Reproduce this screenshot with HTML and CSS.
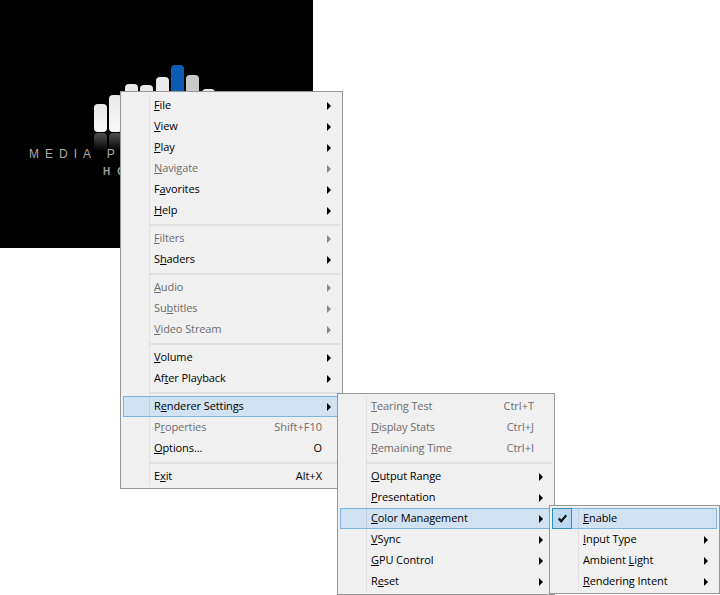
FILE: index.html
```html
<!DOCTYPE html>
<html lang="en">
<head>
<meta charset="utf-8">
<title>Media Player Classic menu</title>
<link rel="stylesheet" href="styles.css">
</head>
<body>
<div class="stage">
  <div class="video">
    <div class="bars">
      <i class="bar b1"></i><i class="bar b2"></i><i class="bar b3"></i><i class="bar b4"></i><i class="bar b5"></i><i class="bar blue"></i><i class="bar gray"></i><i class="bar b8"></i><i class="bar b9"></i>
    </div>
    <div class="reflections">
      <i class="ref"></i><i class="ref"></i><i class="ref"></i><i class="ref"></i><i class="ref"></i>
    </div>
    <div class="title">MEDIA P</div>
    <div class="subtitle">HO</div>
  </div>

  <div class="menu menu-main">
    <div class="item sub"><span class="label"><u>F</u>ile</span></div>
    <div class="item sub"><span class="label"><u>V</u>iew</span></div>
    <div class="item sub"><span class="label"><u>P</u>lay</span></div>
    <div class="item sub off"><span class="label"><u>N</u>avigate</span></div>
    <div class="item sub"><span class="label">F<u>a</u>vorites</span></div>
    <div class="item sub"><span class="label"><u>H</u>elp</span></div>
    <div class="sep"></div>
    <div class="item sub off"><span class="label"><u>F</u>ilters</span></div>
    <div class="item sub"><span class="label">S<u>h</u>aders</span></div>
    <div class="sep"></div>
    <div class="item sub off"><span class="label"><u>A</u>udio</span></div>
    <div class="item sub off"><span class="label">Su<u>b</u>titles</span></div>
    <div class="item sub off"><span class="label"><u>V</u>ideo Stream</span></div>
    <div class="sep"></div>
    <div class="item sub"><span class="label"><u>V</u>olume</span></div>
    <div class="item sub"><span class="label">Af<u>t</u>er Playback</span></div>
    <div class="sep"></div>
    <div class="item sub hot"><span class="label">R<u>e</u>nderer Settings</span></div>
    <div class="item off"><span class="label">P<u>r</u>operties</span><span class="key">Shift+F10</span></div>
    <div class="item"><span class="label"><u>O</u>ptions...</span><span class="key">O</span></div>
    <div class="sep"></div>
    <div class="item"><span class="label">E<u>x</u>it</span><span class="key">Alt+X</span></div>
  </div>

  <div class="menu menu-renderer">
    <div class="item off"><span class="label"><u>T</u>earing Test</span><span class="key">Ctrl+T</span></div>
    <div class="item off"><span class="label"><u>D</u>isplay Stats</span><span class="key">Ctrl+J</span></div>
    <div class="item off"><span class="label"><u>R</u>emaining Time</span><span class="key">Ctrl+I</span></div>
    <div class="sep"></div>
    <div class="item sub"><span class="label"><u>O</u>utput Range</span></div>
    <div class="item sub"><span class="label"><u>P</u>resentation</span></div>
    <div class="item sub hot"><span class="label"><u>C</u>olor Management</span></div>
    <div class="item sub"><span class="label"><u>V</u>Sync</span></div>
    <div class="item sub"><span class="label"><u>G</u>PU Control</span></div>
    <div class="item sub"><span class="label">R<u>e</u>set</span></div>
  </div>

  <div class="menu menu-color">
    <div class="item hot checked">
      <span class="check"><svg width="11" height="10" viewBox="0 0 11 10"><path d="M1 5.2 L2.6 3.6 L4.2 5.4 L8.6 0.6 L10 2 L4.2 9 Z" fill="#111"/></svg></span>
      <span class="label"><u>E</u>nable</span>
    </div>
    <div class="item sub"><span class="label"><u>I</u>nput Type</span></div>
    <div class="item sub"><span class="label">Ambient <u>L</u>ight</span></div>
    <div class="item sub"><span class="label"><u>R</u>endering Intent</span></div>
  </div>
</div>
</body>
</html>
```
FILE: styles.css
```css
html, body {
  margin: 0;
  padding: 0;
  background: #fff;
}
.stage {
  position: relative;
  width: 720px;
  height: 595px;
  overflow: hidden;
  font-family: "Open Sans", "Noto Sans", sans-serif;
  font-size: 11px;
  color: #000;
}
.video {
  width: 313px;
  height: 248px;
  background: #000;
  box-sizing: border-box;
  padding: 65px 0 0 94px;
  overflow: hidden;
}
.bars {
  display: flex;
  align-items: flex-end;
  gap: 2.4px;
  height: 67px;
}
.bar {
  display: block;
  width: 13px;
  flex: none;
  border-radius: 4px;
  background: linear-gradient(#e8e8e8, #f8f8f8);
}
.b1 { height: 28px; }
.b2 { height: 37px; }
.b3 { height: 48px; }
.b4 { height: 47px; }
.b5 { height: 55px; }
.blue { height: 67px; background: #0c5cb4; }
.gray { height: 57px; background: #c9c9c9; }
.b8 { height: 43px; }
.b9 { height: 30px; }
.reflections {
  display: flex;
  gap: 2.4px;
  margin-top: 1px;
}
.ref {
  display: block;
  width: 13px;
  height: 18px;
  flex: none;
  border-radius: 4px 4px 0 0;
  background: linear-gradient(#505050, #000);
}
.title {
  margin: -3px 0 0 -65px;
  font-family: "Liberation Sans", sans-serif;
  font-size: 12px;
  line-height: 13px;
  letter-spacing: 6px;
  word-spacing: 1px;
  color: #ababab;
  white-space: nowrap;
}
.subtitle {
  margin: 5px 0 0 11px;
  transform: translateX(-2px);
  font-family: "Liberation Sans", sans-serif;
  font-size: 10px;
  font-weight: bold;
  line-height: 12px;
  letter-spacing: 7px;
  color: #a0a0a0;
  white-space: nowrap;
}
.menu {
  position: absolute;
  box-sizing: border-box;
  padding: 2px;
  background: linear-gradient(#e0e0e0, #e0e0e0) 28px 2px / 1px calc(100% - 4px) no-repeat, #f0f0f0;
  border: 1px solid #979797;
}
.menu-main { left: 120px; top: 91px; width: 223px; height: 398px; padding-top: 3px; }
.menu-renderer { left: 337px; top: 393px; width: 218px; height: 202px; }
.menu-color { left: 549px; top: 505px; width: 171px; height: 89px; }
.item {
  position: relative;
  display: flex;
  align-items: center;
  justify-content: space-between;
  box-sizing: border-box;
  height: 21px;
  padding: 0 17px 0 31px;
  white-space: nowrap;
}
.label {
  padding-bottom: 2px;
  line-height: 19px;
  letter-spacing: -0.1px;
}
.key {
  padding-bottom: 2px;
  margin-right: 1px;
  line-height: 19px;
  text-align: right;
}
.off { color: #6d6d6d; }
.hot {
  background: linear-gradient(#bfd2e4, #bfd2e4) 26px 1px / 1px 19px no-repeat, #d1e2f2;
  box-shadow: inset 0 0 0 1px #7eb4e2;
}
.sub::after {
  content: "";
  width: 0;
  height: 0;
  margin-right: -8px;
  border-style: solid;
  border-width: 4px 0 4px 4px;
  border-color: transparent transparent transparent #000;
}
.sub.off::after {
  border-left-color: #8a8a8a;
}
.sep {
  height: 2px;
  margin: 3px 0 2px 27px;
  background: #e0e0e0;
}
.check {
  position: absolute;
  left: 0;
  top: 0;
  box-sizing: border-box;
  width: 20px;
  height: 21px;
  display: flex;
  align-items: center;
  justify-content: center;
  background: #bcd9f1;
  border: 1px solid #2f8fc0;
}
```
